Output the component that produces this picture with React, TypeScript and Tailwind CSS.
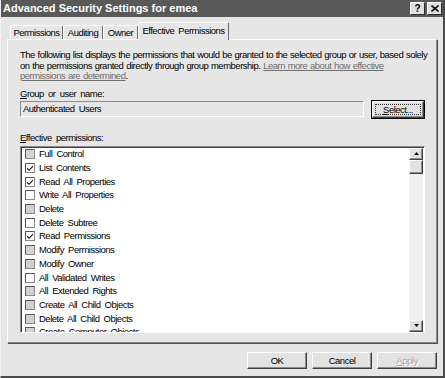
import React from "react";

const FONT = "font-[family-name:'Liberation_Sans',Arial,sans-serif]";
const TXT = "text-[9.5px] tracking-[-0.5px] [word-spacing:2px]";

type Kind = "gray" | "white" | "checked";
const items: [string, Kind][] = [
  ["Full Control", "gray"],
  ["List Contents", "checked"],
  ["Read All Properties", "checked"],
  ["Write All Properties", "white"],
  ["Delete", "gray"],
  ["Delete Subtree", "white"],
  ["Read Permissions", "checked"],
  ["Modify Permissions", "gray"],
  ["Modify Owner", "gray"],
  ["All Validated Writes", "white"],
  ["All Extended Rights", "gray"],
  ["Create All Child Objects", "gray"],
  ["Delete All Child Objects", "gray"],
  ["Create Computer Objects", "gray"],
];

function Check({ kind }: { kind: Kind }) {
  const bg = kind === "gray" ? "bg-[#d2d2d2]" : "bg-white";
  return (
    <div
      className={`w-[10px] h-[10px] shrink-0 border border-t-[#5a5a5a] border-l-[#5a5a5a] border-r-[#8a8a8a] border-b-[#8a8a8a] ${bg} flex items-center justify-center`}
    >
      {kind === "checked" && (
        <svg width="8" height="8" viewBox="0 0 8 8">
          <path d="M1 3.5 L3 5.5 L7 1.5 L7 3 L3 7 L1 5 Z" fill="#111" />
        </svg>
      )}
    </div>
  );
}

function Tab({ label, w, active }: { label: string; w: string; active?: boolean }) {
  if (active) {
    return (
      <div
        className={`${w} h-[18px] -mb-px relative z-10 bg-[#e6e6e6] border-t border-l border-t-white border-l-white border-r border-r-[#6a6a6a] rounded-t-[2px] flex items-start justify-center pt-[2px] ${TXT} leading-[12px] text-black whitespace-nowrap`}
      >
        {label}
      </div>
    );
  }
  return (
    <div
      className={`${w} h-[14px] bg-[#e6e6e6] border-t border-l border-t-white border-l-white border-r border-r-[#6a6a6a] rounded-t-[2px] flex items-center justify-center ${TXT} leading-[12px] text-black whitespace-nowrap`}
    >
      {label}
    </div>
  );
}

const btn3d =
  "bg-[#e2e2e2] border border-t-white border-l-white border-r-[#404040] border-b-[#404040] shadow-[inset_-1px_-1px_0_#8a8a8a]";

function Button({ children, disabled }: { children: React.ReactNode; disabled?: boolean }) {
  return (
    <div
      className={`w-[60px] h-[17px] ${btn3d} flex items-center justify-center ${TXT} leading-[12px] ${
        disabled ? "text-[#a8a8a8] [text-shadow:1px_1px_0_#ffffff]" : "text-black"
      }`}
    >
      {children}
    </div>
  );
}

function ScrollBtn({ up }: { up?: boolean }) {
  return (
    <div className={`h-[12px] w-full ${btn3d} flex items-center justify-center`}>
      <svg width="5" height="3" viewBox="0 0 5 3">
        {up ? <path d="M0 3 L2.5 0 L5 3 Z" fill="#111" /> : <path d="M0 0 L2.5 3 L5 0 Z" fill="#111" />}
      </svg>
    </div>
  );
}

export default function App() {
  return (
    <div
      className={`w-[445px] h-[378px] bg-[#e6e6e6] flex flex-col border-r-2 border-b-2 border-r-[#4a4a4a] border-b-[#4a4a4a] border-l border-l-[#f4f4f4] overflow-hidden ${FONT}`}
    >
      {/* Title bar */}
      <div className="h-[17px] shrink-0 bg-[#595959] flex items-center justify-between pl-[2px] pr-[1px]">
        <span className="text-white font-bold text-[11px] leading-[13px]">
          Advanced Security Settings for emea
        </span>
        <div className="flex gap-[2px]">
          <div className="w-[15px] h-[13px] bg-[#e0e0e0] border border-t-white border-l-white border-r-[#303030] border-b-[#303030] flex items-center justify-center text-[10px] leading-[10px] font-bold text-black">
            ?
          </div>
          <div className="w-[15px] h-[13px] bg-[#e0e0e0] border border-t-white border-l-white border-r-[#303030] border-b-[#303030] flex items-center justify-center">
            <svg width="8" height="7" viewBox="0 0 8 7">
              <path d="M0.5 0.5 L7.5 6.5 M7.5 0.5 L0.5 6.5" stroke="#111" strokeWidth="1.6" />
            </svg>
          </div>
        </div>
      </div>

      {/* Tabs */}
      <div className="h-[22px] shrink-0 flex items-end pl-[9px]">
        <Tab label="Permissions" w="w-[53px]" />
        <Tab label="Auditing" w="w-[40px]" />
        <Tab label="Owner" w="w-[35px]" />
        <Tab label="Effective Permissions" w="w-[91px]" active />
      </div>

      {/* Panel */}
      <div className={`ml-[6px] mr-[6px] h-[304px] shrink-0 border border-t-white border-l-white border-r-[#8a8a8a] border-b-[#8a8a8a] shadow-[1px_1px_0_#505050] pl-[12px] pr-[10px] pt-[10px] ${TXT} text-black`}>
        <p className="leading-[10.5px] whitespace-nowrap [word-spacing:0.6px]">
          The following list displays the permissions that would be granted to the selected group or user, based solely
          <br />
          on the permissions granted directly through group membership.{" "}
          <span className="text-[#6e6e6e] underline">Learn more about how effective</span>
          <br />
          <span className="text-[#6e6e6e] underline">permissions are determined</span>.
        </p>

        <div className="mt-[6px] leading-[11px]">
          <span className="underline">G</span>roup or user name:
        </div>
        <div className="mt-px h-[19px] flex items-center">
          <div className="w-[344px] h-[16px] border border-t-[#8a8a8a] border-l-[#8a8a8a] border-r-white border-b-white bg-[#e6e6e6] flex items-center pl-[2px] leading-[12px]">
            Authenticated Users
          </div>
          <div className="ml-[7px] w-[54px] h-[19px] border border-black">
            <div className={`w-full h-full ${btn3d} p-[2px]`}>
              <div className="w-full h-full border border-dotted border-[#333] flex items-center justify-center leading-[11px]">
                <span>
                  <span className="underline">S</span>elect...
                </span>
              </div>
            </div>
          </div>
        </div>

        <div className="mt-[13px] leading-[11px]">
          <span className="underline">E</span>ffective permissions:
        </div>
        <div className="mt-[3px] w-[405px] h-[187px] bg-white border border-t-[#8a8a8a] border-l-[#8a8a8a] border-r-white border-b-white shadow-[inset_1px_1px_0_#404040] flex">
          <div className="flex-1 overflow-hidden pt-px">
            {items.map(([label, kind]) => (
              <div key={label} className="h-[13.7px] flex items-center pl-[4px]">
                <Check kind={kind} />
                <span className="ml-[4px] leading-[12px] whitespace-nowrap">{label}</span>
              </div>
            ))}
          </div>
          <div className="w-[14px] shrink-0 bg-[#f0f0f0] flex flex-col mt-px mr-px">
            <ScrollBtn up />
            <div className={`h-[14px] w-full ${btn3d}`} />
            <div className="flex-1" />
            <ScrollBtn />
          </div>
        </div>
      </div>

      {/* Buttons */}
      <div className="mt-[9px] flex justify-end gap-[5px] pr-[6px]">
        <Button>OK</Button>
        <Button>Cancel</Button>
        <Button disabled>
          <span>
            <span className="underline">A</span>pply
          </span>
        </Button>
      </div>
    </div>
  );
}
